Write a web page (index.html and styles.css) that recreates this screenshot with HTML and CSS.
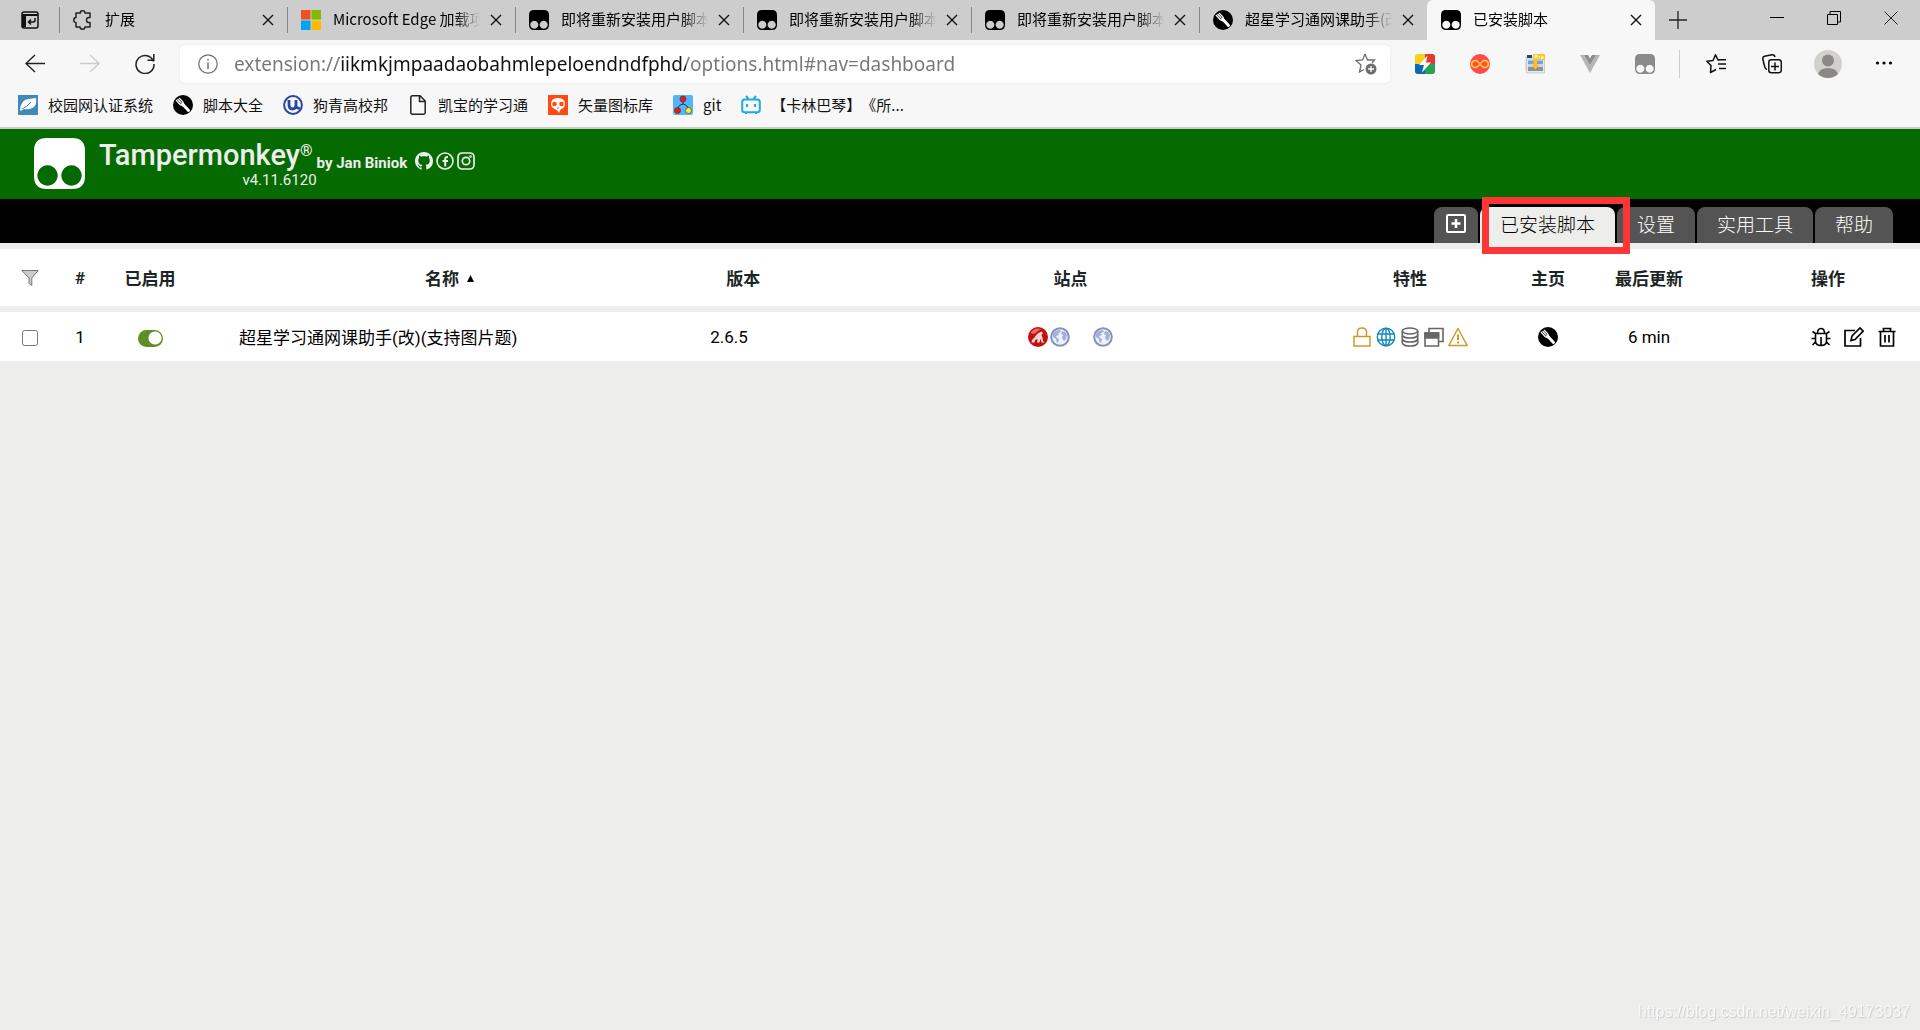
FILE: index.html
```
<!DOCTYPE html>
<html lang="zh-CN">
<head>
    <meta charset="UTF-8">
    <meta name="viewport" content="width=device-width, initial-scale=1.0">
    <title>已安装脚本</title>
    <link rel="stylesheet" href="styles.css">
</head>
<body>
<!-- icons used more than once -->
<svg class="defs" aria-hidden="true">
    <symbol id="monkey" viewBox="0 0 20 20">
        <path fill="currentColor" fill-rule="evenodd" d="M5 0H15Q20 0 20 5V15Q20 20 15 20H5Q0 20 0 15V5Q0 0 5 0ZM5.300 10.700a4 4 0 1 0 .01 0ZM14.700 10.700a4 4 0 1 0 .01 0Z"/>
    </symbol>
    <symbol id="fork" viewBox="0 0 20 20">
        <circle cx="10" cy="10" r="10" fill="#000"/>
        <path d="M10 9.500L15.500 15.500" stroke="#fff" stroke-width="3" stroke-linecap="round"/>
        <path d="M3 5L7 9.500Q9 11 10 9.500Q11 8 9.500 6.500L6 3M4.500 4L8.300 8" fill="none" stroke="#fff" stroke-width="1.200"/>
        <path d="M7.500 9L9.500 7.500L11.500 11L10 12Z" fill="#fff"/>
    </symbol>
    <symbol id="close" viewBox="0 0 12 12">
        <path d="M1 1L11 11M11 1L1 11" stroke="#111" stroke-width="1.400" fill="none"/>
    </symbol>
    <symbol id="earth" viewBox="0 0 20 20">
        <circle cx="10" cy="10" r="8.800" fill="#eef1f8" stroke="#8290c4" stroke-width="2"/>
        <path fill="#a3b1d6" d="M3 7Q5 3 10 3L11 5L8 6L9 8L6 9L7 11L9 12L8 16Q6 15 6 12L3 10ZM12 4L15 5L17 8L16 12L14 14L12 11L13 8L11 7Z"/>
    </symbol>
</svg>

<div class="tabstrip">
    <button class="tab-menu" aria-label="Tab actions">
        <svg width="18" height="18" viewBox="0 0 18 18" fill="none" stroke="#111" stroke-width="1.500"><rect x="1" y="1" width="16" height="16" rx="2"/><path d="M1 4H17" stroke-width="2"/><path d="M3 4V16" stroke-width="4"/><path d="M14 7V9.500Q14 11 12 11H8M10 8.500L7.500 11L10 13.500"/></svg>
    </button>
    <div class="tab">
        <svg class="ico" viewBox="0 0 20 20" fill="none" stroke="#222" stroke-width="1.500"><path d="M7 3H7.500Q7 .800 9.500 .800T12 3H17V7.500Q13.500 7 13.500 10T17 12.500V17H12Q12 19.200 9.500 19.200T7 17H3V12.500Q.800 12.500 .800 10T3 7.500V3Z" stroke-linejoin="round"/></svg>
        <span class="tab-title">扩展</span>
        <button class="tab-close" aria-label="Close"><svg><use href="#close"/></svg></button>
    </div>
    <div class="tab">
        <svg class="ico" viewBox="0 0 20 20"><path fill="#f25022" d="M0 0h9.500v9.500H0z"/><path fill="#7fba00" d="M10.500 0H20v9.500h-9.500z"/><path fill="#00a4ef" d="M0 10.500h9.500V20H0z"/><path fill="#ffb900" d="M10.500 10.500H20V20h-9.500z"/></svg>
        <span class="tab-title">Microsoft Edge 加载项</span>
        <button class="tab-close" aria-label="Close"><svg><use href="#close"/></svg></button>
    </div>
    <div class="tab">
        <svg class="ico monkey"><use href="#monkey"/></svg>
        <span class="tab-title">即将重新安装用户脚本</span>
        <button class="tab-close" aria-label="Close"><svg><use href="#close"/></svg></button>
    </div>
    <div class="tab">
        <svg class="ico monkey"><use href="#monkey"/></svg>
        <span class="tab-title">即将重新安装用户脚本</span>
        <button class="tab-close" aria-label="Close"><svg><use href="#close"/></svg></button>
    </div>
    <div class="tab">
        <svg class="ico monkey"><use href="#monkey"/></svg>
        <span class="tab-title">即将重新安装用户脚本</span>
        <button class="tab-close" aria-label="Close"><svg><use href="#close"/></svg></button>
    </div>
    <div class="tab">
        <svg class="ico"><use href="#fork"/></svg>
        <span class="tab-title">超星学习通网课助手(改</span>
        <button class="tab-close" aria-label="Close"><svg><use href="#close"/></svg></button>
    </div>
    <div class="tab active">
        <svg class="ico"><use href="#monkey"/></svg>
        <span class="tab-title">已安装脚本</span>
        <button class="tab-close" aria-label="Close"><svg><use href="#close"/></svg></button>
    </div>
    <button class="tab-new" aria-label="New tab"><svg width="18" height="18" viewBox="0 0 18 18" stroke="#222" stroke-width="1.300"><path d="M9 0V18M0 9H18"/></svg></button>
    <div class="window-buttons">
        <button aria-label="Minimize"><svg width="14" height="14" viewBox="0 0 14 14" stroke="#000"><path d="M0 6.500H14"/></svg></button>
        <button aria-label="Restore"><svg width="14" height="14" viewBox="0 0 14 14" stroke="#000" fill="none"><path d="M.500 3.500H10.500V13.500H.500ZM3 3V.500H13.500V11H11"/></svg></button>
        <button aria-label="Close window"><svg width="14" height="14" viewBox="0 0 14 14" stroke="#222"><path d="M.500 .500L13.500 13.500M13.500 .500L.500 13.500"/></svg></button>
    </div>
</div>

<div class="toolbar">
    <button class="nav-btn" aria-label="Back"><svg class="ico" viewBox="0 0 20 20" fill="none" stroke="#222" stroke-width="1.400"><path d="M20 9.500H1M10 1L1 9.500L10 18"/></svg></button>
    <button class="nav-btn" aria-label="Forward" disabled><svg class="ico" viewBox="0 0 20 20" fill="none" stroke="#ccc" stroke-width="1.400"><path d="M0 9.500H19M10 1L19 9.500L10 18"/></svg></button>
    <button class="nav-btn" aria-label="Refresh"><svg class="ico" viewBox="0 0 20 20" fill="none" stroke="#222" stroke-width="1.500"><path d="M18.500 7.500A9 9 0 1 0 19 10M12.500 6.300H18.800V0"/></svg></button>
    <div class="address">
        <svg class="ico" viewBox="0 0 20 20" fill="none" stroke="#6e6e6e" stroke-width="1.200"><circle cx="10" cy="10" r="9.200"/><path d="M10 8.500V15M10 5V6.500" stroke-width="1.500"/></svg>
        <input type="text" aria-label="Address" value="extension://iikmkjmpaadaobahmlepeloendndfphd/options.html#nav=dashboard">
        <button aria-label="Add to favorites"><svg width="22" height="22" viewBox="0 0 22 22" fill="none" stroke="#6e6e6e" stroke-width="1.300"><path d="M10 1L12.500 7H19.500L17 10M10 1L7.500 7L1 7.500L6 12L4.500 19L9 16.500"/><circle cx="16" cy="16" r="5.500" fill="#6e6e6e" stroke="none"/><path d="M16 13V19M13 16H19" stroke="#fff"/></svg></button>
    </div>
    <div class="extensions">
        <button aria-label="Lightning"><svg class="ico" viewBox="0 0 20 20"><rect width="20" height="20" rx="3" fill="#f6d21f"/><path d="M10 0H17Q20 0 20 3V10H10Z" fill="#e53935"/><path d="M10 10H20V17Q20 20 17 20H10Z" fill="#26a352"/><path d="M0 10H10V20H3Q0 20 0 17Z" fill="#0d68b5"/><path d="M12.500 1.500L4 11H9L7 18.500L16 8.500H11Z" fill="#fff"/></svg></button>
        <button aria-label="Infinity"><svg class="ico" viewBox="0 0 20 20"><circle cx="10" cy="10" r="10" fill="#ff4b50"/><path d="M10 10Q7 6.300 5.200 6.500A3.500 3.500 0 0 0 5.200 13.500Q7 13.700 10 10Q13 6.300 14.800 6.500A3.500 3.500 0 0 1 14.800 13.500Q13 13.700 10 10Z" fill="none" stroke="#ffd21e" stroke-width="1.700"/></svg></button>
        <button aria-label="Image downloader"><svg class="ico" viewBox="0 0 20 20"><rect x="0" y="2" width="13" height="15" fill="#dde5ea"/><rect x="1.500" y="5" width="18" height="14" fill="#e8ebec" stroke="#aaa" stroke-width=".500"/><path d="M3 6.500H18V10H3Z" fill="#6aa7d8"/><path d="M3 10H18V13H3Z" fill="#c9d6dc"/><path d="M3 13H18V17H3Z" fill="#8f9490"/><path d="M2 1H7V4H2Z" fill="#27456b"/><rect x="8" width="12" height="6" fill="#ffc62e"/><path d="M8.500 6H12V11H14L10.500 15.500L6.500 11H8.500Z" fill="#ffbe24"/><path d="M10 4.500V1.500H12V3H10M14 4.500V2.500H15M16.500 2.500H18V4.500H16.500Z" stroke="#fff" stroke-width=".800" fill="none"/></svg></button>
        <button aria-label="Vue"><svg class="ico" viewBox="0 0 20 20"><path d="M0 1H4L10 11L16 1H20L10 19Z" fill="#b5b5b5"/><path d="M4 1H8L10 4.500L12 1H16L10 11Z" fill="#8b8b8b"/></svg></button>
        <button class="off" aria-label="Tampermonkey"><svg class="ico monkey"><use href="#monkey"/></svg></button>
    </div>
    <div class="browser-menu">
        <button aria-label="Favorites"><svg class="ico" viewBox="0 0 20 20" fill="none" stroke="#111" stroke-width="1.500" stroke-linejoin="round"><path d="M14 6H12L9.500 .800L7 6.500L.800 7.200L5 11.500L4.500 18.500L10 15.500M13 5.700H20M12 10H20M13 14.500H20"/></svg></button>
        <button aria-label="Collections"><svg class="ico" viewBox="0 0 20 20" fill="none" stroke="#111" stroke-width="1.500"><rect x="6.800" y="5.800" width="12.500" height="13" rx="2.500"/><path d="M13 8.500V16.500M9 12.500H17M5 15.500Q3 15 2.500 12L.800 5Q.500 3 2.500 2.300L10 .800Q12.500 .500 13 3"/></svg></button>
        <button aria-label="Profile"><svg width="28" height="28" viewBox="0 0 28 28"><circle cx="14" cy="14" r="14" fill="#d3d1ce"/><circle cx="14" cy="10.500" r="6" fill="#8b8886"/><path d="M4 24Q6 18 14 18T24 24Q20 28 14 28T4 24Z" fill="#8b8886"/></svg></button>
        <button aria-label="More"><svg width="18" height="18" viewBox="0 0 18 18"><circle cx="2.500" cy="8" r="1.600"/><circle cx="9" cy="8" r="1.600"/><circle cx="15.500" cy="8" r="1.600"/></svg></button>
    </div>
</div>

<nav class="bookmarks">
    <a href="#"><svg class="ico" viewBox="0 0 20 20"><path fill="#3f8abb" d="M0 0h20v20H0z"/><path d="M2 15Q3 5 10 4L18 3Q19 9 16 12Q12 15 6 14L3 16Z" fill="#fff"/><path d="M4 14Q9 12 13 7" stroke="#3f8abb" fill="none"/></svg>校园网认证系统</a>
    <a href="#"><svg class="ico"><use href="#fork"/></svg>脚本大全</a>
    <a href="#"><svg class="ico" viewBox="0 0 20 20" fill="none" stroke="#2a46a0"><circle cx="10" cy="10" r="8.900" stroke-width="2"/><path d="M6 5V10Q6 14 9.500 14T13 10V5M13 10Q13 14 17 13" stroke-width="2.800"/></svg>狗青高校邦</a>
    <a href="#"><svg class="ico" viewBox="0 0 20 20" fill="none" stroke="#222" stroke-width="1.500"><path d="M4.500 .800H12L17.200 6V17.500Q17.200 19.200 15.500 19.200H4.500Q2.800 19.200 2.800 17.500V2.500Q2.800 .800 4.500 .800ZM11.500 1V6.500H17"/></svg>凯宝的学习通</a>
    <a href="#"><svg class="ico" viewBox="0 0 20 20"><path fill="#ff4a12" d="M0 0h20v20H0z"/><path d="M10 3Q17 3 17 9Q17 13 12.500 14.500L11 18L9 15Q3 13 3 9Q3 3 10 3Z" fill="#fff"/><circle cx="6.500" cy="9" r="2.300" fill="#ff4a12"/><circle cx="13.500" cy="9" r="2.300" fill="#ff4a12"/><path d="M9 13H11" stroke="#ff4a12"/></svg>矢量图标库</a>
    <a href="#"><svg class="ico" viewBox="0 0 20 20"><rect width="20" height="20" rx="2" fill="#55b4fb"/><path d="M10 5V9M5 14Q5 10 10 9Q15 10 15 14" stroke="#234" fill="none"/><g stroke="#333" stroke-width=".600"><circle cx="10" cy="4" r="3" fill="#f21616"/><circle cx="4.500" cy="15.500" r="3" fill="#f21616"/><circle cx="15.500" cy="15.500" r="3" fill="#f4ee22"/></g></svg>git</a>
    <a href="#"><svg class="ico" viewBox="0 0 20 20" fill="none" stroke="#1eaae2" stroke-width="2"><rect x="1.200" y="4.500" width="17.600" height="12.800" rx="2.500"/><path d="M5 1L7.500 4M15 1L12.500 4M6 9V12M14 9V12M5 17V19M15 17V19"/></svg>【卡林巴琴】《所...</a>
</nav>

<header class="head">
    <svg class="logo"><use href="#monkey"/></svg>
    <div class="brand">
        <h1>Tampermonkey<sup>®</sup></h1>
        <div class="version">v4.11.6120</div>
    </div>
    <span class="author">by Jan Biniok</span>
    <div class="social">
        <a href="#" aria-label="GitHub"><svg viewBox="0 0 16 16" fill="currentColor"><path d="M8 0C3.580 0 0 3.580 0 8c0 3.540 2.290 6.530 5.470 7.590.4.070.550-.170.550-.380 0-.190-.010-.820-.010-1.490-2.010.370-2.530-.490-2.690-.940-.090-.230-.480-.940-.820-1.130-.280-.150-.680-.520-.010-.530.630-.010 1.080.580 1.230.820.720 1.210 1.870.870 2.330.660.070-.520.280-.870.510-1.070-1.780-.2-3.640-.890-3.640-3.950 0-.870.310-1.590.820-2.150-.080-.2-.360-1.020.080-2.120 0 0 .670-.210 2.200.820.640-.180 1.320-.270 2-.270s1.360.090 2 .270c1.530-1.040 2.200-.820 2.200-.820.440 1.100.160 1.920.080 2.120.510.560.820 1.270.820 2.150 0 3.070-1.870 3.750-3.650 3.950.290.250.540.730.540 1.480 0 1.070-.010 1.930-.010 2.200 0 .210.150.460.550.380A8.010 8.010 0 0 0 16 8c0-4.420-3.580-8-8-8z"/></svg></a>
        <a href="#" aria-label="Facebook"><svg viewBox="0 0 18 18" fill="none" stroke="currentColor" stroke-width="1.600"><circle cx="9" cy="9" r="8"/><path d="M12 5H11Q9.200 5 9.200 7V14.500M6.500 9H12" stroke-width="2"/></svg></a>
        <a href="#" aria-label="Instagram"><svg viewBox="0 0 18 18" fill="none" stroke="currentColor" stroke-width="1.700"><rect x="1" y="1" width="16" height="16" rx="4"/><circle cx="9" cy="9" r="3.700"/><circle cx="13.500" cy="4.500" r=".500"/></svg></a>
    </div>
</header>

<nav class="main-tabs">
    <button class="add" aria-label="添加新脚本"><svg width="20" height="20" viewBox="0 0 20 20" fill="none" stroke="#fff" stroke-width="2"><rect x="1" y="1" width="18" height="17" rx="1"/><path d="M10 5V14M5.500 9.500H14.500" stroke-width="2.500"/></svg></button>
    <button class="current">已安装脚本</button>
    <button>设置</button>
    <button>实用工具</button>
    <button>帮助</button>
</nav>

<table class="scripts">
    <colgroup>
        <col class="c-check"><col class="c-num"><col class="c-on"><col class="c-name"><col class="c-ver"><col><col class="c-feat"><col class="c-home"><col class="c-upd"><col class="c-act">
    </colgroup>
    <thead>
        <tr>
            <th><svg width="18" height="16" viewBox="0 0 18 16" fill="#ccc" stroke="#777"><path d="M.800 .500H17.200L10.800 8V15.500L8 13.500V8Z"/></svg></th>
            <th>#</th>
            <th>已启用</th>
            <th>名称 <svg class="sort" viewBox="0 0 8 8"><path d="M4 0L8 8H0Z"/></svg></th>
            <th class="ver">版本</th>
            <th>站点</th>
            <th>特性</th>
            <th>主页</th>
            <th>最后更新</th>
            <th class="act">操作</th>
        </tr>
    </thead>
    <tbody>
        <tr>
            <td><input type="checkbox" class="pick" aria-label="选择脚本"></td>
            <td>1</td>
            <td><input type="checkbox" class="switch" aria-label="已启用" checked></td>
            <td class="name">超星学习通网课助手(改)(支持图片题)</td>
            <td class="ver">2.6.5</td>
            <td>
                <div class="icons sites">
                    <svg class="ico" viewBox="0 0 20 20"><circle cx="10" cy="10" r="10" fill="#c40f0f"/><path d="M2.500 6Q6 0 13 2L6 7Z" fill="#e66"/><path d="M3.500 15.500Q4 12 6.500 10.500Q9 6 13.500 4.500L15 6L13.500 8Q14.500 10 15 14L16.500 15.500H13.500L12.500 11.500L11.500 15.500H9L9.500 12L7 13L6.500 15.500Z" fill="#f6d6d3"/></svg>
                    <svg class="ico"><use href="#earth"/></svg>
                    <svg class="ico apart"><use href="#earth"/></svg>
                </div>
            </td>
            <td>
                <div class="icons">
                    <svg class="ico" viewBox="0 0 20 20" fill="none" stroke="#cf9a24" stroke-width="1.500"><path d="M2 9.500H18V19H2ZM5.500 9.500V5Q5.500 1 10 1T14.500 5V9.500"/></svg>
                    <svg class="ico" viewBox="0 0 20 20" fill="none" stroke="#1287b8" stroke-width="1.400"><circle cx="10" cy="10" r="8.700"/><ellipse cx="10" cy="10" rx="4.200" ry="8.700"/><path d="M10 1V19M1.500 7H18.500M1.500 13H18.500"/></svg>
                    <svg class="ico" viewBox="0 0 20 20" fill="none" stroke="#666" stroke-width="1.600"><ellipse cx="10" cy="4" rx="7.700" ry="3"/><path d="M2.300 4V16Q3 19 10 19T17.700 16V4M2.300 8Q3 11 10 11T17.700 8M2.300 12Q3 15 10 15T17.700 12"/></svg>
                    <svg class="ico" viewBox="0 0 20 20" fill="none" stroke="#666" stroke-width="1.600"><path d="M1 6H14.500V19H1ZM5 5V1.500H19V14.500H15"/><path d="M1 6H14.500V11H1Z" fill="#666"/></svg>
                    <svg class="ico" viewBox="0 0 20 20" fill="none" stroke="#cf9a24" stroke-width="1.500" stroke-linejoin="round"><path d="M10 1.500L19.200 18.500H.800Z"/><path d="M10 7.500V13M10 14.500V16.500" stroke-width="2"/></svg>
                </div>
            </td>
            <td><div class="icons"><a href="#" aria-label="主页"><svg class="ico"><use href="#fork"/></svg></a></div></td>
            <td>6 min</td>
            <td>
                <div class="icons actions">
                    <button aria-label="调试"><svg class="ico" viewBox="0 0 20 20" fill="none" stroke="#000" stroke-width="1.600"><path d="M4.500 6.500H15.500V14Q15.500 18.500 10 18.500T4.500 14ZM6.500 6.500Q6.500 1.500 10 1.500T13.500 6.500M10 10V18M.500 11.500H4.500M15.500 11.500H19.500M4.500 6.500L1.500 4.500M15.500 6.500L18.500 4.500M4.500 15L1.500 18M15.500 15L18.500 18"/></svg></button>
                    <button aria-label="编辑"><svg class="ico" viewBox="0 0 20 20" fill="none" stroke="#000" stroke-width="1.700"><path d="M11 3.500H1V19H16.500V11M8 9L16 1L19.200 4.200L11 12.500L7 13.500Z"/></svg></button>
                    <button aria-label="删除"><svg class="ico" viewBox="0 0 20 20" fill="none" stroke="#000" stroke-width="1.700"><path d="M1.500 4.500H18.500M6.500 4.500V1.500H13.500V4.500M3.500 4.500V19H16.500V4.500M8 8V15.500M12 8V15.500"/></svg></button>
                </div>
            </td>
        </tr>
    </tbody>
</table>
<div class="watermark">https://blog.csdn.net/weixin_49173037</div>
</body>
</html>
```
FILE: styles.css
```
* {
    box-sizing: border-box;
}
body {
    margin: 0;
    background: #ededec;
    color: #000;
    font-family: Roboto, "Noto Sans CJK SC", sans-serif;
    font-size: 17px;
}
button {
    border: none;
    background: none;
    padding: 0;
    font: inherit;
    color: inherit;
    cursor: pointer;
}
svg {
    display: block;
    flex: none;
}
.defs {
    position: absolute;
    width: 0;
    height: 0;
}
.ico {
    width: 20px;
    height: 20px;
}

/* browser tabs */
.tabstrip,
.bookmarks {
    font-family: "Noto Sans CJK SC", sans-serif;
    font-size: 15px;
}
.tabstrip {
    display: flex;
    height: 40px;
    background: #cdcdcd;
}
.tab-menu {
    display: flex;
    align-items: center;
    justify-content: center;
    width: 59px;
}
.tab {
    display: flex;
    align-items: center;
    flex: 0 1 228px;
    min-width: 0;
    padding: 0 13px;
    border-left: 1px solid transparent;
    border-image: linear-gradient(transparent 8px, #888 8px, #888 32px, transparent 32px) 1;
}
.tab-title {
    flex: 1;
    margin: 0 10px 0 12px;
    line-height: 38px;
    padding-bottom: 2px;
    white-space: nowrap;
    overflow: hidden;
    mask-image: linear-gradient(to left, transparent, #000 26px);
}
.tab-close svg {
    width: 12px;
    height: 12px;
}
.tab.active {
    background: #f7f7f7;
    border-image: none;
    border-radius: 6px 6px 0 0;
}
.tab-new {
    margin-left: 14px;
}
.window-buttons {
    display: flex;
    margin-left: auto;
    padding: 0 1px 4px 0;
}
.window-buttons button {
    display: flex;
    align-items: center;
    justify-content: center;
    width: 57px;
}

/* address bar */
.toolbar {
    display: flex;
    align-items: center;
    height: 48px;
    padding: 0 8px 0 7px;
    background: #f7f7f7;
}
.nav-btn {
    display: flex;
    justify-content: center;
    width: 55px;
}
.address {
    display: flex;
    align-items: center;
    flex: 1;
    height: 38px;
    margin-left: 8px;
    padding: 0 13px 0 18px;
    background: #fff;
    border-radius: 5px;
    box-shadow: 0 0 3px #e4e4e4;
}
.address input {
    flex: 1;
    margin: 0 16px;
    padding: 0;
    border: none;
    outline: none;
    font-family: "Noto Sans", sans-serif;
    font-size: 19px;
    color: transparent;
    /* grey scheme and path, dark host */
    background: linear-gradient(to right, #767676 105px, #111 105px, #111 452px, #767676 452px);
    background-clip: text;
}
.extensions,
.browser-menu {
    display: flex;
    align-items: center;
}
.extensions button {
    display: flex;
    justify-content: center;
    width: 55px;
}
.browser-menu button {
    display: flex;
    justify-content: center;
    width: 56px;
}
.extensions {
    padding: 0 7px;
}
.extensions .off {
    color: #8a8a8a;
}
.browser-menu {
    border-left: 1px solid #ccc;
    padding-left: 8px;
}

.bookmarks {
    display: flex;
    gap: 20px;
    height: 41px;
    padding: 0 18px 6px;
    align-items: center;
    background: #f7f7f7;
    border-bottom: 2px solid #ccc;
    text-spacing-trim: space-all;
}
.bookmarks a {
    display: flex;
    align-items: center;
    gap: 10px;
    color: #111;
    text-decoration: none;
    white-space: nowrap;
}

/* page header */
.head {
    display: flex;
    height: 70px;
    padding: 9px 34px;
    background: #056a00;
    color: #eee;
}
.logo {
    width: 51px;
    height: 51px;
    color: #fff;
}
.brand {
    margin-left: 14px;
}
.brand h1 {
    margin: 0;
    font-size: 29px;
    line-height: 35px;
    font-weight: 500;
}
.brand sup {
    font-size: 16px;
    line-height: 1px;
    vertical-align: 9px;
}
.version {
    margin-right: -4px;
    text-align: right;
    font-size: 15px;
    line-height: 15px;
}
.author {
    margin-left: 4px;
    font-size: 15px;
    line-height: 50px;
    font-weight: bold;
}
.social {
    display: flex;
    gap: 3px;
    margin: 14px 0 0 8px;
}
.social a {
    color: inherit;
}
.social svg {
    width: 18px;
    height: 18px;
}

.main-tabs {
    display: flex;
    align-items: flex-end;
    justify-content: flex-end;
    gap: 2px;
    height: 44px;
    padding-right: 27px;
    background: #000;
}
.main-tabs button {
    height: 36px;
    padding: 0 20px 3px;
    border-radius: 8px 8px 0 0;
    background: #545454;
    color: #fff;
    font-size: 19px;
    font-weight: 300;
}
.main-tabs .add {
    padding: 0 12px 3px;
}
.main-tabs .current {
    position: relative;
    background: #ededec;
    color: #000;
}
/* red marker round the open tab */
.main-tabs .current::after {
    content: "";
    position: absolute;
    top: -10px;
    left: 2px;
    right: -15px;
    bottom: -11px;
    border: 7px solid #fc3636;
    z-index: 1;
}

/* script list */
.scripts {
    width: 100%;
    margin-top: 6px;
    table-layout: fixed;
    border-spacing: 0;
    text-align: center;
}
.scripts th,
.scripts td {
    padding: 0;
    background: #fff;
    white-space: nowrap;
}
.scripts th {
    height: 63px;
    border-bottom: 6px solid #ededec;
    color: #1c2526;
}
.scripts th svg {
    margin: 0 auto;
}
.scripts td {
    height: 49px;
}
.c-check { width: 60px; }
.c-num { width: 40px; }
.c-on { width: 100px; }
.c-name { width: 26%; }
.c-ver { width: 106px; }
.c-feat { width: 148px; }
.c-home { width: 128px; }
.c-upd { width: 74px; }
.c-act { width: 234px; }

.scripts .name {
    padding-left: 39px;
    text-align: left;
}
.scripts .ver {
    text-align: left;
    padding-left: 11px;
}
.scripts th.ver {
    padding-left: 27px;
}
.scripts th.act {
    padding-right: 75px;
    text-align: right;
}
.scripts .sort {
    display: inline-block;
    width: 7px;
    height: 7px;
    margin: 0 0 3px 4px;
}
.pick {
    width: 16px;
    height: 16px;
    margin: 0;
    vertical-align: middle;
}
.switch {
    appearance: none;
    width: 25px;
    height: 17px;
    margin: 0;
    border-radius: 9px;
    background: radial-gradient(circle at 17px 8px, #fff 6px, #5f8f24 7px);
    vertical-align: middle;
}
.icons {
    display: flex;
    align-items: center;
    justify-content: center;
    gap: 4px;
}
.sites {
    gap: 2px;
}
.sites .apart {
    margin-left: 21px;
}
.actions {
    justify-content: flex-end;
    gap: 13px;
    padding-right: 23px;
}

.watermark {
    position: fixed;
    right: 10px;
    bottom: 9px;
    font-family: "Liberation Sans", sans-serif;
    font-size: 16px;
    color: #f8f8f8;
    text-shadow: 1px 1px 1px #ccc;
}
```
